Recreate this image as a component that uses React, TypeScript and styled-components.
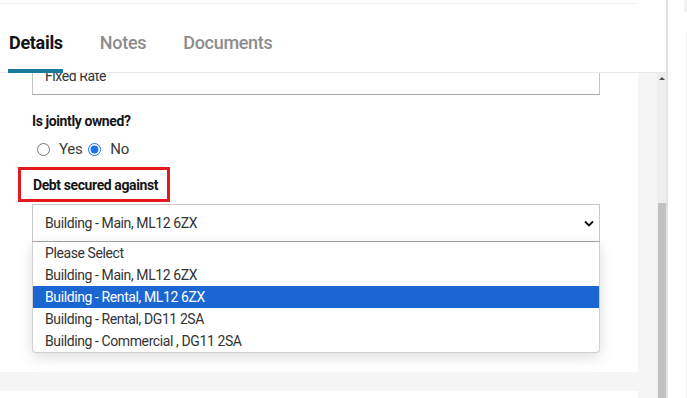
import React from 'react'
import styled, { createGlobalStyle } from 'styled-components'

const GlobalStyle = createGlobalStyle`
  html, body {
    margin: 0;
    padding: 0;
    background: #ffffff;
    font-family: Roboto, 'Liberation Sans', Arial, sans-serif;
  }
`

const OPTIONS = [
  'Please Select',
  'Building - Main, ML12 6ZX',
  'Building - Rental, ML12 6ZX',
  'Building - Rental, DG11 2SA',
  'Building - Commercial , DG11 2SA'
]

const App: React.FC = () => {
  return (
    <Screen>
      <GlobalStyle />
      <Frame>
        <TopRule />
        <TabBar>
          <Tab active>Details</Tab>
          <Tab>Notes</Tab>
          <Tab>Documents</Tab>
        </TabBar>
        <ScrollArea>
          <Viewport>
            <Card>
              <Input>Fixed Rate</Input>
              <Label className='mt-18'>Is jointly owned?</Label>
              <RadioRow>
                <RadioItem>
                  <input type='radio' name='joint' readOnly />
                  <span>Yes</span>
                </RadioItem>
                <RadioItem>
                  <input type='radio' name='joint' defaultChecked />
                  <span>No</span>
                </RadioItem>
              </RadioRow>
              <Highlight>
                <Label>Debt secured against</Label>
              </Highlight>
              <SelectWrap>
                <Select>
                  <span>Building - Main, ML12 6ZX</span>
                  <svg width='10' height='7' viewBox='0 0 10 7'>
                    <path d='M1 1.5 L5 5.5 L9 1.5' fill='none' stroke='#111' strokeWidth='1.8' />
                  </svg>
                </Select>
                <Dropdown>
                  {OPTIONS.map((o, i) => (
                    <Option key={o} selected={i === 2}>{o}</Option>
                  ))}
                </Dropdown>
              </SelectWrap>
              {/* field under the open list */}
              <Input className='mt-42' />
            </Card>
            <Card className='next' />
          </Viewport>
          <Scrollbar>
            <Arrow />
            <Thumb />
          </Scrollbar>
        </ScrollArea>
      </Frame>
      <SidePanel>
        <SideTab />
        <SideBody />
      </SidePanel>
    </Screen>
  )
}

const Screen = styled.div`
  width: 687px;
  height: 398px;
  display: flex;
  overflow: hidden;
  background: #fff;
`
const Frame = styled.div`
  width: 666px;
  flex: none;
  display: flex;
  flex-direction: column;
  border-right: 2px solid #e2e2e2;
  background: #fff;
`
const TopRule = styled.div`
  width: 637px;
  height: 3px;
  border-bottom: 1px solid #f0f0f0;
`
const TabBar = styled.div`
  height: 68px;
  flex: none;
  display: flex;
  align-items: flex-end;
  gap: 36px;
  padding-left: 8px;
  border-bottom: 1px solid #e9e9e9;
  position: relative;
  z-index: 2;
  background: #fff;
`
const Tab = styled.div<{ active?: boolean }>`
  font-size: 18px;
  line-height: 22px;
  font-weight: ${p => (p.active ? 700 : 500)};
  letter-spacing: -0.3px;
  color: ${p => (p.active ? '#141414' : '#8c8c8c')};
  padding: 0 0 15px 1px;
  margin-bottom: -1px;
  border-bottom: 4px solid ${p => (p.active ? '#187b9c' : 'transparent')};
`
const ScrollArea = styled.div`
  flex: 1;
  display: flex;
  overflow: hidden;
  min-height: 0;
`
const Viewport = styled.div`
  flex: 1;
  background: #f5f5f5;
  overflow: hidden;
  display: flex;
  flex-direction: column;
  gap: 19px;
`
const Card = styled.div`
  width: 638px;
  box-sizing: border-box;
  background: #fff;
  padding: 0 38px 50px 32px;
  margin-top: -16px;
  display: flex;
  flex-direction: column;
  flex: none;
  .mt-18 {
    margin-top: 18px;
  }
  .mt-42 {
    margin-top: 42px;
  }
  &.next {
    margin-top: 0;
    height: 40px;
    padding: 0;
  }
`
const Input = styled.div`
  height: 38px;
  box-sizing: border-box;
  border: 1px solid #c4c4c4;
  border-bottom-color: #a9a9a9;
  padding: 0 12px;
  display: flex;
  align-items: center;
  font-size: 14px;
  letter-spacing: -0.4px;
  color: #333;
`
const Label = styled.div`
  font-size: 14px;
  line-height: 17px;
  font-weight: 700;
  letter-spacing: -0.4px;
  color: #161616;
`
const RadioRow = styled.div`
  display: flex;
  align-items: center;
  gap: 6px;
  margin: 9px 0 0 5px;
  height: 20px;
`
const RadioItem = styled.label`
  display: flex;
  align-items: center;
  gap: 9px;
  font-size: 15px;
  letter-spacing: -0.3px;
  color: #3a3a3a;
  input {
    margin: 0;
    width: 13px;
    height: 13px;
    accent-color: #1a73e8;
  }
`
const Highlight = styled.div`
  align-self: flex-start;
  margin: 8px 0 2px -14px;
  border: 3px solid #e3191f;
  padding: 6px 10px 5px 12px;
  width: 124px;
  height: 18px;
  display: flex;
  align-items: center;
  ${Label} {
    white-space: nowrap;
  }
`
const SelectWrap = styled.div`
  position: relative;
  z-index: 1;
`
const Select = styled.div`
  height: 38px;
  box-sizing: border-box;
  border: 1px solid #c8c8c8;
  border-bottom-color: #a6a6a6;
  padding: 0 5px 0 12px;
  display: flex;
  align-items: center;
  justify-content: space-between;
  font-size: 14px;
  letter-spacing: -0.4px;
  color: #333;
`
const Dropdown = styled.div`
  position: absolute;
  top: 100%;
  left: 0;
  right: 0;
  background: #fff;
  border: 1px solid #d0d0d0;
  border-top: none;
  border-radius: 0 0 4px 4px;
  box-shadow: 0 4px 14px rgba(0, 0, 0, 0.14);
`
const Option = styled.div<{ selected?: boolean }>`
  height: 22px;
  line-height: 22px;
  padding-left: 12px;
  font-size: 14px;
  letter-spacing: -0.4px;
  color: ${p => (p.selected ? '#fff' : '#333')};
  background: ${p => (p.selected ? '#1a66d2' : 'transparent')};
`
const Scrollbar = styled.div`
  width: 9px;
  flex: none;
  background: #efefef;
  display: flex;
  flex-direction: column;
  align-items: center;
`
const Arrow = styled.div`
  margin-top: 4px;
  width: 0;
  height: 0;
  border-left: 3px solid transparent;
  border-right: 3px solid transparent;
  border-bottom: 3px solid #505050;
`
const Thumb = styled.div`
  margin-top: 123px;
  width: 8px;
  flex: 1;
  background: #c1c1c1;
`
const SidePanel = styled.div`
  flex: 1;
  display: flex;
  flex-direction: column;
  align-items: flex-end;
  background: #fff;
`
const SideTab = styled.div`
  width: 3px;
  height: 12px;
  background: #f2f2f2;
`
const SideBody = styled.div`
  margin-top: 20px;
  width: 1px;
  flex: 1;
  background: #ececec;
`

export default App
